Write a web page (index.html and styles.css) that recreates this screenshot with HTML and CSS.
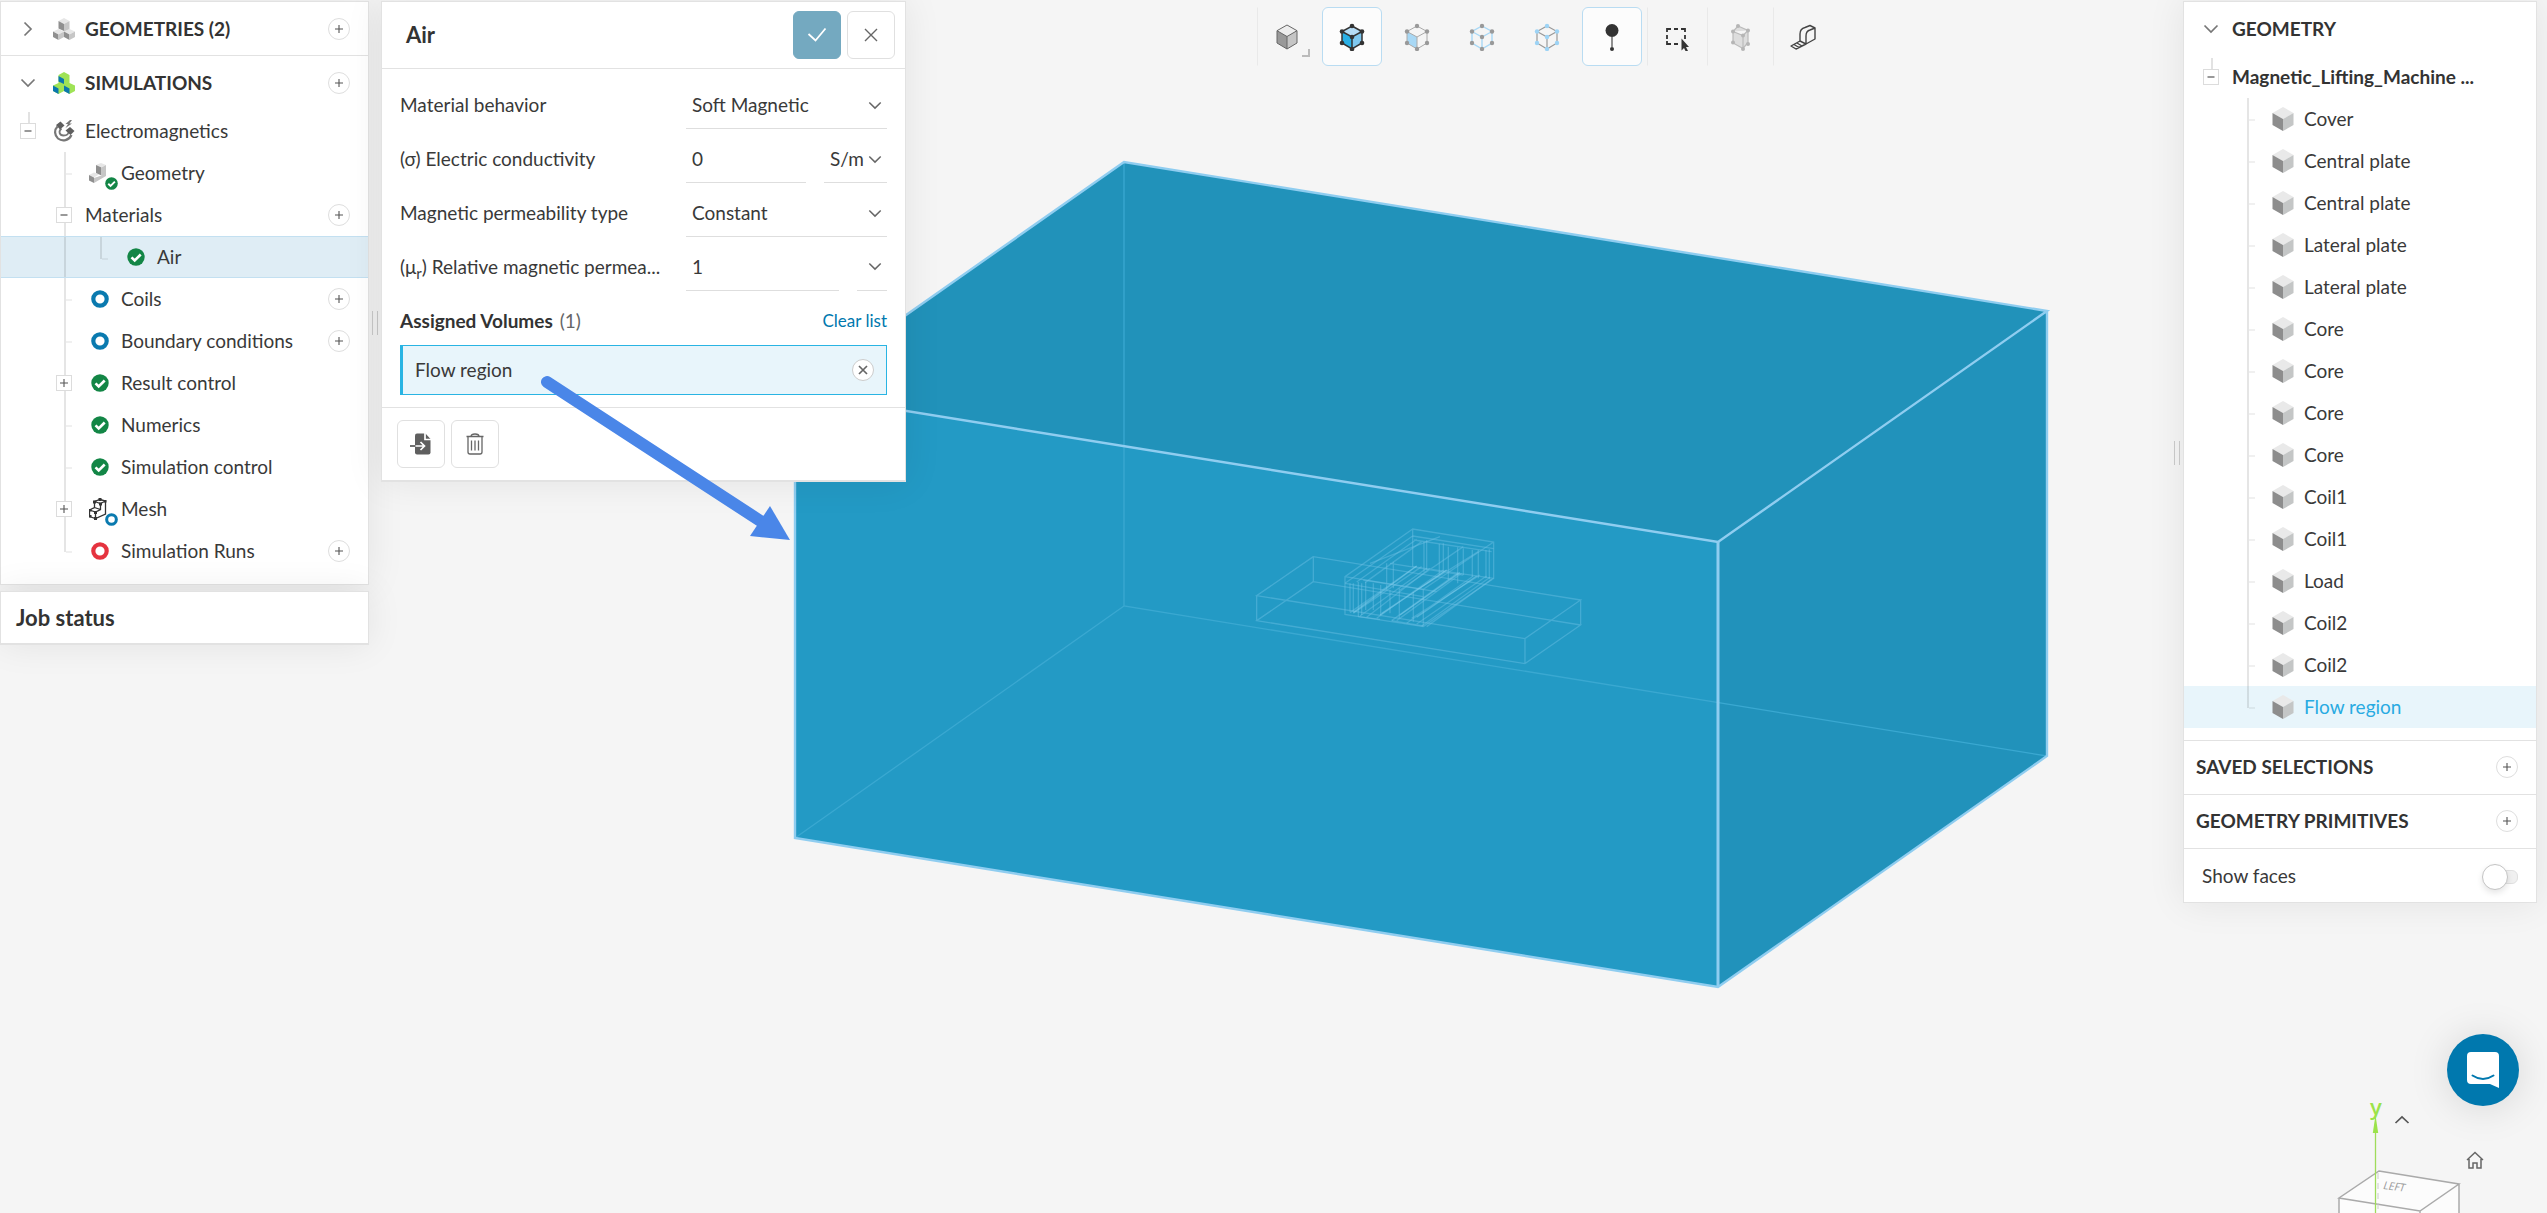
FILE: index.html
```html
<!DOCTYPE html>
<html lang="en">
<head>
<meta charset="utf-8">
<title>Electromagnetics - Air</title>
<link rel="stylesheet" href="styles.css">
</head>
<body>
<svg class="defs" aria-hidden="true">
  <symbol id="plus" viewBox="0 0 10 10"><path d="M5 1v8M1 5h8" fill="none" stroke="#555" stroke-width="1.1"/></symbol>
  <symbol id="minus" viewBox="0 0 10 10"><path d="M1.500 5h7" fill="none" stroke="#555" stroke-width="1.2"/></symbol>
  <symbol id="down" viewBox="0 0 16 10"><path d="M1.500 1.500L8 8l6.500-6.500" fill="none" stroke="currentColor" stroke-width="1.700"/></symbol>
  <symbol id="right" viewBox="0 0 10 16"><path d="M1.500 1.500L8 8l-6.500 6.500" fill="none" stroke="currentColor" stroke-width="1.700"/></symbol>
  <symbol id="ok" viewBox="0 0 18 18"><circle cx="9" cy="9" r="8.700" fill="#138646"/><path d="M4.500 9.300l3.200 3.200 6-6" fill="none" stroke="#fff" stroke-width="2.600"/></symbol>
  <symbol id="ring" viewBox="0 0 18 18"><circle cx="9" cy="9" r="6.700" fill="#fff" stroke="currentColor" stroke-width="4.200"/></symbol>
  <symbol id="cube" viewBox="0 0 22 26"><path d="M11 1l10.500 6L11 13 .5 7z" fill="#e9e9e9"/><path d="M.5 7L11 13v12L.5 19z" fill="#8d8d8d"/><path d="M21.500 7L11 13v12l10.500-6z" fill="#c4c6c6"/></symbol>
  <symbol id="geo" viewBox="0 0 22 22"><path d="M11 0l5.500 3-5.500 3-5.500-3zM5.500 11L11 13.500 5.500 16.500 0 13.500zM16.500 11l5.500 2.500-5.500 3-5.500-3z" fill="#e6e6e6"/><path d="M5.500 3L11 6v7l-5.500-2.500zM0 13.500l5.500 3V22L0 19zM11 13.500l5.500 3V22L11 19z" fill="#8f8f8f"/><path d="M16.500 3L11 6v7.500l5.500-2.500zM11 13.500l-5.500 3V22L11 19zM22 13.500l-5.500 3V22l5.500-3z" fill="#c6c6c6"/></symbol>
  <symbol id="sim" viewBox="0 0 22 22"><path d="M11 0l5.500 3v8l5.500 2.500V19l-5.500 3L11 19l-5.500 3L0 19v-5.500L5.500 11V3z" fill="#9fe356"/><path d="M5.500 4L11 7v5l-5.500-2.500zM0 13.500l5.500 3V22L0 19zM11 13.500l5.500 3V22L11 19z" fill="#0a78ae"/></symbol>
</svg>

<svg class="scene" viewBox="0 0 2547 1213" preserveAspectRatio="xMidYMid slice" role="img" aria-label="3D model view">
  <path d="M795 393L1124 162 2047 311 1718 542z" fill="#2192ba"/>
  <path d="M1718 542L2047 311V756L1718 987z" fill="#2192bb"/>
  <path d="M795 393L1718 542V987L795 838z" fill="#239ac5"/>
  <path d="M1124 162V606L2047 756M1124 606L795 838" fill="none" stroke="#3aa8d1" stroke-width="1.300"/>
  <g transform="translate(1230 500) scale(.3333)" fill="none" stroke="#72c4e6" stroke-width="4" stroke-opacity=".42">
    <path d="M250 170L80 287 885 416 1052 300zM250 245L80 362 885 491 1052 375zM250 170v75M80 287v75M885 416v75M1052 300v75"/>
    <path d="M548 87L345 230V343L580 380 791 235V126zM345 230L580 268 791 126M548 87V200M580 268V380"/>
    <path d="M548 108L345 250M560 118L380 246M575 125L405 248M548 108L791 146M552 120L785 155M345 250L580 290"/>
    <path d="M360 250V335M370 250V335M385 246V350M395 250V345M407 246V330M430 250V330M452 255V345M480 270V340M508 265V355M550 275V365"/>
    <path d="M582 125V215M590 120V210M628 132V225M640 130V215M655 140V240M683 142V250M700 145V225M727 150V230M745 150V235M768 150V235M778 148V238"/>
    <path d="M360 338L560 198M370 340L575 200M390 348L590 205M410 352L600 205M440 355L640 210M455 340L650 210M485 362L685 218M500 362L695 220M530 370L730 228M545 355L750 225M560 372L770 228M575 378L780 232M590 380L785 238"/>
    <path d="M420 190L630 110M470 190V270M490 185V265M510 270L700 140M560 270L745 155M400 240L620 275M480 190L700 225M548 200L791 235M385 350L450 358M485 362L580 378"/>
    <path d="M560 198L370 338M650 210L450 345M690 218L510 345M740 228L560 352" stroke="#8fd6f2"/>
  </g>
  <path d="M795 393L1124 162 2047 311 1718 542zM795 393V838L1718 987 2047 756V311" fill="none" stroke="#8fcdf0" stroke-width="2.400"/>
  <path d="M1718 542V987" stroke="#8fcdf0" stroke-width="3"/>
</svg>

<main class="layout">
  <aside class="left">
    <nav class="card" aria-label="Simulation tree">
      <div class="head ruled">
        <span class="slot"><svg class="chev-r"><use href="#right"/></svg></span>
        <span class="slot"><svg class="i22"><use href="#geo"/></svg></span>
        <h2>GEOMETRIES (2)</h2>
        <button class="add" aria-label="Add geometry"><svg><use href="#plus"/></svg></button>
      </div>
      <div class="head">
        <span class="slot"><svg class="chev"><use href="#down"/></svg></span>
        <span class="slot"><svg class="i22"><use href="#sim"/></svg></span>
        <h2>SIMULATIONS</h2>
        <button class="add" aria-label="Add simulation"><svg><use href="#plus"/></svg></button>
      </div>
      <div class="row">
        <span class="slot stub"><button class="box" aria-label="Collapse"><svg><use href="#minus"/></svg></button></span>
        <span class="slot"><svg class="i22" viewBox="0 0 22 22"><path d="M4.500 6.500C1 10 1.500 15.500 5 18.500c4.500 3.500 11 2 13.500-3.500" fill="none" stroke="#777" stroke-width="2.200"/><path d="M8.500 8.500c-3.500 3-2 7 2 7 3.500 0 5.500-1.500 5-4.500" fill="none" stroke="#777" stroke-width="1.800"/><path d="M3 5l4.500-3.500 4 4L7 9.500zM12.500 10.500l4.500-3.500 4.500 4-4 4z" fill="#5f5f5f"/><path d="M17 0l-4.500 4h2.500l-2.500 4L19 3.500h-2.500L19 0z" fill="#777"/></svg></span>
        <span>Electromagnetics</span>
      </div>
      <div class="row">
        <span class="slot"></span><span class="slot line"></span>
        <span class="slot badge"><svg class="i22" viewBox="0 0 22 22"><path d="M12 1l5 2-4.500 2.500L7 3zM0 13l5-2.500 5 2-5 3z" fill="#e6e6e6"/><path d="M7 3l5.500 2.500v8L7 11zM0 13l5 2.500V21l-5-2.500z" fill="#8f8f8f"/><path d="M17 3l-4.500 2.500v8L5 16v5l12-7z" fill="#c6c6c6"/></svg><svg class="mini"><use href="#ok"/></svg></span>
        <span>Geometry</span>
      </div>
      <div class="row">
        <span class="slot"></span><span class="slot line"><button class="box" aria-label="Collapse materials"><svg><use href="#minus"/></svg></button></span>
        <span>Materials</span>
        <button class="add" aria-label="Add material"><svg><use href="#plus"/></svg></button>
      </div>
      <div class="row picked">
        <span class="slot"></span><span class="slot line bare"></span><span class="slot line last"></span>
        <span class="slot"><svg class="i18"><use href="#ok"/></svg></span>
        <span>Air</span>
      </div>
      <div class="row">
        <span class="slot"></span><span class="slot line"></span>
        <span class="slot blue"><svg class="i18"><use href="#ring"/></svg></span>
        <span>Coils</span>
        <button class="add" aria-label="Add coil"><svg><use href="#plus"/></svg></button>
      </div>
      <div class="row">
        <span class="slot"></span><span class="slot line"></span>
        <span class="slot blue"><svg class="i18"><use href="#ring"/></svg></span>
        <span>Boundary conditions</span>
        <button class="add" aria-label="Add boundary condition"><svg><use href="#plus"/></svg></button>
      </div>
      <div class="row">
        <span class="slot"></span><span class="slot line"><button class="box" aria-label="Expand result control"><svg><use href="#plus"/></svg></button></span>
        <span class="slot"><svg class="i18"><use href="#ok"/></svg></span>
        <span>Result control</span>
      </div>
      <div class="row">
        <span class="slot"></span><span class="slot line"></span>
        <span class="slot"><svg class="i18"><use href="#ok"/></svg></span>
        <span>Numerics</span>
      </div>
      <div class="row">
        <span class="slot"></span><span class="slot line"></span>
        <span class="slot"><svg class="i18"><use href="#ok"/></svg></span>
        <span>Simulation control</span>
      </div>
      <div class="row">
        <span class="slot"></span><span class="slot line"><button class="box" aria-label="Expand mesh"><svg><use href="#plus"/></svg></button></span>
        <span class="slot badge blue"><svg class="i22" viewBox="0 0 22 22"><path d="M11 1.500l5.500 1.500v13L6.500 20.500l-6-2V12l5-2.500V3.500zM5.500 3.500l6 2 5-2.500M11.500 5.500v6l-5 2.500-6-2M5.500 9.500l6 2M6.500 14v6.500M11.500 11.500V5" fill="none" stroke="#333" stroke-width="1.300"/><path d="M9.500 0h3v3h-3zM4 2.500h3v3H4zM15 2h2.500v2.500H15zM10 4.500h3v3h-3zM0 11h2.500v2.500H0zM5 13h3v3H5zM5 19h3v3H5zM0 17h2.500v2.500H0z" fill="#333"/></svg><svg class="mini"><use href="#ring"/></svg></span>
        <span>Mesh</span>
      </div>
      <div class="row">
        <span class="slot"></span><span class="slot line last"></span>
        <span class="slot red"><svg class="i18"><use href="#ring"/></svg></span>
        <span>Simulation Runs</span>
        <button class="add" aria-label="Add simulation run"><svg><use href="#plus"/></svg></button>
      </div>
    </nav>
    <section class="card job"><h2>Job status</h2></section>
  </aside>

  <div class="grip" role="separator"></div>

  <form class="card panel">
    <header>
      <h1>Air</h1>
      <button type="button" class="sq primary" aria-label="Apply"><svg width="20" height="16" viewBox="0 0 20 16"><path d="M1.500 7l7 6.500L18.500 1.500" fill="none" stroke="#fff" stroke-width="1.800"/></svg></button>
      <button type="button" class="sq" aria-label="Close"><svg width="14" height="14" viewBox="0 0 14 14"><path d="M1 1l12 12M13 1L1 13" fill="none" stroke="#666" stroke-width="1.400"/></svg></button>
    </header>
    <div class="fields">
      <div class="field">
        <label for="behavior">Material behavior</label>
        <div class="pick wide"><select id="behavior"><option>Soft Magnetic</option></select><svg><use href="#down"/></svg></div>
      </div>
      <div class="field">
        <label for="sigma">(σ) Electric conductivity</label>
        <input id="sigma" type="text" value="0">
        <div class="pick unit"><select aria-label="Unit"><option>S/m</option></select><svg><use href="#down"/></svg></div>
      </div>
      <div class="field">
        <label for="ptype">Magnetic permeability type</label>
        <div class="pick wide"><select id="ptype"><option>Constant</option></select><svg><use href="#down"/></svg></div>
      </div>
      <div class="field">
        <label for="mu">(μ<sub>r</sub>) Relative magnetic permea...</label>
        <input id="mu" type="text" value="1">
        <button type="button" class="more" aria-label="More options"><svg><use href="#down"/></svg></button>
      </div>
      <div class="assigned">
        <h3>Assigned Volumes</h3><span class="count">(1)</span><a href="#clear">Clear list</a>
      </div>
      <div class="chip">
        <span>Flow region</span>
        <button type="button" class="add" aria-label="Remove Flow region"><svg viewBox="0 0 10 10"><path d="M1 1l8 8M9 1L1 9" fill="none" stroke="#666" stroke-width="1.700"/></svg></button>
      </div>
    </div>
    <footer>
      <button type="button" class="sq" aria-label="Import"><svg width="22" height="22" viewBox="0 0 22 22"><path d="M7 .5h8.500L20.500 6v13.500a2 2 0 0 1-2 2H7a2 2 0 0 1-2-2v-17a2 2 0 0 1 2-2z" fill="#5f5f5f"/><path d="M15 0v6.500h6M5 13h9M10.500 9l4 4-4 4" fill="none" stroke="#fff" stroke-width="1.700"/><path d="M0 13h5.500" stroke="#5f5f5f" stroke-width="1.800"/></svg></button>
      <button type="button" class="sq" aria-label="Delete"><svg width="18" height="22" viewBox="0 0 18 22"><path d="M.5 3.500h17M5 3.500q0-2.500 4-2.500t4 2.500M2 4v15q0 2 2 2h10q2 0 2-2V4M5.500 7.500v10M9 7.500v10M12.500 7.500v10" fill="none" stroke="#666" stroke-width="1.300"/></svg></button>
    </footer>
  </form>

  <div class="tools" role="toolbar" aria-label="View tools">
    <button class="first" aria-label="Shading"><svg viewBox="0 0 26 26"><path d="M13 1l10 5.700L13 12.500 3 6.700z" fill="#ededed"/><path d="M3 6.700l10 5.800V25L3 19z" fill="#999"/><path d="M23 6.700l-10 5.800V25l10-6z" fill="#c5c5c5"/><path d="M13 1l10 5.700V19L13 25 3 19V6.700zM3 6.700l10 5.800 10-5.800M13 12.500V25" fill="none" stroke="#666"/></svg></button>
    <button class="on" aria-label="Select volumes"><svg viewBox="0 0 26 28"><path d="M13 3l10 5.500L13 14 3 8.500z" fill="#b5dcf5"/><path d="M3 8.500L13 14v12L3 20z" fill="#29b0e6"/><path d="M23 8.500L13 14v12l10-6z" fill="#7fc8ef"/><path d="M13 3l10 5.500V20l-10 6-10-6V8.500zM3 8.500L13 14l10-5.500M13 14v12" fill="none" stroke="#333" stroke-width="1.500"/><g fill="#333"><circle cx="13" cy="3" r="2.300"/><circle cx="23" cy="8.500" r="2.300"/><circle cx="23" cy="20" r="2.300"/><circle cx="13" cy="26" r="2.300"/><circle cx="3" cy="20" r="2.300"/><circle cx="3" cy="8.500" r="2.300"/><circle cx="13" cy="14" r="2.300"/></g></svg></button>
    <button aria-label="Select faces"><svg viewBox="0 0 26 28"><path d="M3 8.500L13 14v12L3 20z" fill="#a8d8f5"/><path d="M13 3l10 5.500V20l-10 6-10-6V8.500zM3 8.500L13 14l10-5.500M13 14v12" fill="none" stroke="#aaa"/><g fill="#999"><circle cx="13" cy="3" r="2.200"/><circle cx="23" cy="8.500" r="2.200"/><circle cx="23" cy="20" r="2.200"/><circle cx="13" cy="26" r="2.200"/><circle cx="3" cy="20" r="2.200"/><circle cx="3" cy="8.500" r="2.200"/></g></svg></button>
    <button aria-label="Select edges"><svg viewBox="0 0 26 28"><path d="M13 3l10 5.500V20l-10 6-10-6V8.500zM3 8.500L13 14l10-5.500M13 14v12" fill="none" stroke="#a8d8f5" stroke-width="1.400"/><g fill="#999"><circle cx="13" cy="3" r="2.200"/><circle cx="23" cy="8.500" r="2.200"/><circle cx="23" cy="20" r="2.200"/><circle cx="13" cy="26" r="2.200"/><circle cx="3" cy="20" r="2.200"/><circle cx="3" cy="8.500" r="2.200"/><circle cx="13" cy="14" r="2.200"/></g></svg></button>
    <button aria-label="Select nodes"><svg viewBox="0 0 26 28"><path d="M13 3l10 5.500V20l-10 6-10-6V8.500zM3 8.500L13 14l10-5.500M13 14v12" fill="none" stroke="#999" stroke-width="1.200"/><g fill="#9dd3f5"><circle cx="13" cy="3" r="2.200"/><circle cx="23" cy="8.500" r="2.200"/><circle cx="23" cy="20" r="2.200"/><circle cx="13" cy="26" r="2.200"/><circle cx="3" cy="20" r="2.200"/><circle cx="3" cy="8.500" r="2.200"/><circle cx="13" cy="14" r="2.200"/></g></svg></button>
    <button class="on" aria-label="Probe point"><svg viewBox="0 0 26 28"><circle cx="13" cy="7.500" r="6.500" fill="#333"/><circle cx="13" cy="26" r="2" fill="#333"/><path d="M13 14v11" stroke="#555" stroke-width="1.300"/></svg></button>
    <button class="sep gap" aria-label="Box select"><svg viewBox="0 0 26 28"><path d="M3 9V6h4M10 6h4M17 6h4v3M21 12v4M3 12v4M3 18v3h4M10 21h4" fill="none" stroke="#333" stroke-width="1.800"/><path d="M17.500 15.500v12l2.500-2.500 2 4 2-1-2-4h3z" fill="#333"/></svg></button>
    <button class="sep broad" aria-label="Clip mesh"><svg viewBox="0 0 26 28"><path d="M11 3l10 4.500v12l-5 6-10-5.500V8.500zM6 8.500l10 4 5-5M16 12.500v13" fill="#ddd" stroke="#bbb" stroke-width="1.200"/><g fill="#b5b5b5"><circle cx="11" cy="3" r="2"/><circle cx="21" cy="7.500" r="2"/><circle cx="21" cy="21" r="2"/><circle cx="16" cy="26" r="2"/><circle cx="6" cy="19.500" r="2"/><circle cx="6" cy="8.500" r="2"/><circle cx="16" cy="12.500" r="2"/></g></svg></button>
    <button class="sep" aria-label="Measure"><svg viewBox="0 0 26 28"><path d="M10 18V11C10 7 13 5 15 4.500L20 2.500 25 5V16L16 21V13C16 9 18 7.500 20 7L25 5M10 18L1 23 6 26 16 21 10 18M4 21.500l5 3M7 20l5 3" fill="none" stroke="#444" stroke-width="1.400" stroke-linejoin="round"/></svg></button>
  </div>

  <aside class="right card" aria-label="Geometry tree">
    <div class="grip" role="separator"></div>
    <div class="head">
      <span class="slot"><svg class="chev"><use href="#down"/></svg></span>
      <h2>GEOMETRY</h2>
    </div>
    <div class="row strong">
      <span class="slot stub"><button class="box" aria-label="Collapse"><svg><use href="#minus"/></svg></button></span>
      <span>Magnetic_Lifting_Machine ...</span>
    </div>
    <div class="row"><span class="slot"></span><span class="slot line"></span><span class="slot"><svg class="cube"><use href="#cube"/></svg></span><span>Cover</span></div>
    <div class="row"><span class="slot"></span><span class="slot line"></span><span class="slot"><svg class="cube"><use href="#cube"/></svg></span><span>Central plate</span></div>
    <div class="row"><span class="slot"></span><span class="slot line"></span><span class="slot"><svg class="cube"><use href="#cube"/></svg></span><span>Central plate</span></div>
    <div class="row"><span class="slot"></span><span class="slot line"></span><span class="slot"><svg class="cube"><use href="#cube"/></svg></span><span>Lateral plate</span></div>
    <div class="row"><span class="slot"></span><span class="slot line"></span><span class="slot"><svg class="cube"><use href="#cube"/></svg></span><span>Lateral plate</span></div>
    <div class="row"><span class="slot"></span><span class="slot line"></span><span class="slot"><svg class="cube"><use href="#cube"/></svg></span><span>Core</span></div>
    <div class="row"><span class="slot"></span><span class="slot line"></span><span class="slot"><svg class="cube"><use href="#cube"/></svg></span><span>Core</span></div>
    <div class="row"><span class="slot"></span><span class="slot line"></span><span class="slot"><svg class="cube"><use href="#cube"/></svg></span><span>Core</span></div>
    <div class="row"><span class="slot"></span><span class="slot line"></span><span class="slot"><svg class="cube"><use href="#cube"/></svg></span><span>Core</span></div>
    <div class="row"><span class="slot"></span><span class="slot line"></span><span class="slot"><svg class="cube"><use href="#cube"/></svg></span><span>Coil1</span></div>
    <div class="row"><span class="slot"></span><span class="slot line"></span><span class="slot"><svg class="cube"><use href="#cube"/></svg></span><span>Coil1</span></div>
    <div class="row"><span class="slot"></span><span class="slot line"></span><span class="slot"><svg class="cube"><use href="#cube"/></svg></span><span>Load</span></div>
    <div class="row"><span class="slot"></span><span class="slot line"></span><span class="slot"><svg class="cube"><use href="#cube"/></svg></span><span>Coil2</span></div>
    <div class="row"><span class="slot"></span><span class="slot line"></span><span class="slot"><svg class="cube"><use href="#cube"/></svg></span><span>Coil2</span></div>
    <div class="row region"><span class="slot"></span><span class="slot line last"></span><span class="slot"><svg class="cube"><use href="#cube"/></svg></span><span>Flow region</span></div>
    <div class="head group"><h2>SAVED SELECTIONS</h2><button class="add" aria-label="Add selection"><svg><use href="#plus"/></svg></button></div>
    <div class="head group"><h2>GEOMETRY PRIMITIVES</h2><button class="add" aria-label="Add primitive"><svg><use href="#plus"/></svg></button></div>
    <div class="head group faces"><label for="faces">Show faces</label><input id="faces" type="checkbox" class="switch"></div>
  </aside>
</main>

<svg class="pointer" width="260" height="180" viewBox="540 370 260 180" aria-hidden="true"><path d="M547 382L762 522" stroke="#4a86e8" stroke-width="12" stroke-linecap="round"/><path d="M790 540L770 506 750 536z" fill="#4a86e8"/></svg>

<div class="orient">
  <svg viewBox="0 0 247 203" aria-label="View orientation">
    <path d="M79 161L159 174V203H39V188z" fill="#fcfcfc"/>
    <path d="M79 161L159 174 120 201 39 188zM39 188v15M120 201v2M159 174v29" fill="none" stroke="#aaa" stroke-width="1.500"/>
    <path d="M78 163v40" stroke="#ccc" stroke-dasharray="6 4"/>
    <path d="M75.500 122v81" stroke="#9fdc5a" stroke-width="1.300"/><path d="M75.500 105l2.700 18h-5.400z" fill="#9be34a"/>
    <text x="70" y="105" class="axis">y</text>
    <text x="83" y="179" class="face" transform="rotate(7 83 179)">LEFT</text>
  </svg>
  <button class="up" aria-label="Rotate up"><svg viewBox="0 0 16 10"><path d="M1.500 8L8 2l6.500 6" fill="none" stroke="#555" stroke-width="1.700"/></svg></button>
  <button class="home" aria-label="Home view"><svg viewBox="0 0 18 18"><path d="M1 9l8-7.500L17 9M3 8v9h4v-5h4v5h4V8" fill="none" stroke="#666" stroke-width="1.500"/></svg></button>
</div>
<button class="chat" aria-label="Open chat"><svg width="32" height="36" viewBox="0 0 32 36"><path d="M4 0h24a4 4 0 0 1 4 4v32l-9-4H4a4 4 0 0 1-4-4V4a4 4 0 0 1 4-4z" fill="#fff"/><path d="M5.500 23.500q10.500 7 21 0" fill="none" stroke="#0078ae" stroke-width="2" stroke-linecap="round"/></svg></button>
</body>
</html>
```
FILE: styles.css
```css
* { box-sizing: border-box; }
body {
  margin: 0;
  min-height: 100vh;
  position: relative;
  overflow: hidden;
  background: #f5f5f5;
  color: #393939;
  font: 19px/24px Lato, "Liberation Sans", sans-serif;
}
h1, h2, h3 { margin: 0; font-weight: 700; color: #333; }
h2, h3 { font-size: 19px; line-height: 24px; }
button, input, select { font: inherit; color: inherit; margin: 0; padding: 0; border: 0; background: none; }
svg { display: block; flex: none; }
.defs { position: absolute; width: 0; height: 0; }
.scene { position: absolute; inset: 0; width: 100%; height: 100%; }

.layout {
  position: relative;
  display: flex;
  align-items: flex-start;
  padding: 1px 10px 0 0;
}
.card {
  background: #fff;
  border: 1px solid #e2e2e2;
  box-shadow: 0 0 36px rgba(0, 0, 0, .08);
}
.left { width: 369px; flex: none; display: flex; flex-direction: column; gap: 6px; }
.left nav { padding-bottom: 12px; }
.job { height: 54px; padding: 14px 15px; border-bottom-width: 2px; }
.job h2 { font-size: 22px; }

.head { display: flex; align-items: center; height: 54px; padding: 0 18px 0 9px; color: #777; }
.ruled { border-bottom: 1px solid #e2e2e2; }
.row { display: flex; align-items: center; height: 42px; padding: 0 18px 0 9px; white-space: nowrap; }
.slot { width: 36px; align-self: stretch; flex: none; display: flex; align-items: center; justify-content: center; position: relative; }
.slot + :not(.slot) { margin-left: 3px; }
.line {
  background:
    linear-gradient(rgba(0, 0, 0, .1), rgba(0, 0, 0, .1)) 18px 0 / 2px 100% no-repeat,
    linear-gradient(rgba(0, 0, 0, .06), rgba(0, 0, 0, .06)) 20px 21px / 6px 2px no-repeat;
}
.bare { background-size: 2px 100%, 0 0; }
.last { background-size: 2px 22px, 6px 2px; }
.stub { background: linear-gradient(#e2e2e2, #e2e2e2) 18px 2px / 2px 12px no-repeat; }
.box {
  width: 16px; height: 16px;
  display: flex; align-items: center; justify-content: center;
  background: #fff; border: 1px solid #dcdcdc;
}
.box svg { width: 10px; height: 10px; }
.add {
  width: 22px; height: 22px; margin-left: auto; flex: none;
  display: flex; align-items: center; justify-content: center;
  background: #fff; border: 1px solid #dedede; border-radius: 50%;
}
.add svg { width: 10px; height: 10px; }
.i22 { width: 22px; height: 22px; }
.i18 { width: 18px; height: 18px; }
.cube { width: 22px; height: 26px; }
.chev { width: 16px; height: 10px; }
.chev-r { width: 10px; height: 16px; }
.mini { position: absolute; right: 0; bottom: 4px; width: 13px; height: 13px; }
.blue { color: #0a7aaf; }
.red { color: #e5333f; }
.picked { background: #dfedf5; border: 1px solid #c3e0f1; border-width: 1px 0; }

.grip { width: 6px; height: 24px; margin: 310px 3px 0; flex: none; border: 1px solid #c6c6c6; border-width: 0 1px; }
.right .grip { position: absolute; left: -10px; top: 439px; margin: 0; }

.panel { width: 525px; flex: none; border-bottom-width: 2px; }
.panel header { display: flex; align-items: center; gap: 6px; height: 67px; padding: 0 10px 0 24px; border-bottom: 1px solid #e2e2e2; }
.panel h1 { flex: 1; font-size: 22px; line-height: 28px; }
.sq {
  width: 48px; height: 48px;
  display: flex; align-items: center; justify-content: center;
  background: #fff; border: 1px solid #e0e0e0; border-radius: 6px;
}
.primary { background: #74a9c0; border-color: #74a9c0; }
.fields { padding: 6px 18px 12px; }
.field { display: flex; height: 54px; gap: 18px; }
.field label { flex: 1; min-width: 0; line-height: 60px; white-space: nowrap; }
.field sub { font-size: 15px; line-height: 0; }
.field input, .pick, .more { border-bottom: 1px solid #dedede; height: 54px; }
.field input { width: 120px; flex: none; padding: 6px 0 0 6px; }
#mu { width: 153px; }
.wide { width: 201px; }
.unit { width: 63px; }
.pick { position: relative; flex: none; }
.pick select { width: 100%; height: 54px; padding: 6px 0 0 6px; appearance: none; }
.pick svg { position: absolute; right: 5px; top: 26px; pointer-events: none; }
.pick svg, .more svg { width: 14px; height: 9px; color: #666; }
.more { width: 30px; padding: 6px 5px 0 11px; }
.assigned { display: flex; align-items: center; height: 54px; padding-top: 5px; gap: 7px; }
.count { color: #666; }
.assigned a { margin-left: auto; font-size: 17px; color: #0078ae; text-decoration: none; }
.chip {
  display: flex; align-items: center; height: 50px; padding: 0 12px;
  background: #e8f5fb; border: 1px solid #29b4e3; border-left-width: 3px;
}
.chip .add { border: 1px solid #ccc; }
.panel footer { display: flex; gap: 6px; padding: 12px 15px; border-top: 1px solid #e2e2e2; }

.tools { flex: 1; display: flex; justify-content: center; gap: 5px; padding-top: 6px; }
.tools button {
  width: 60px; height: 59px; flex: none; position: relative;
  display: flex; align-items: center; justify-content: center;
  border: 1px solid transparent;
}
.tools svg { width: 26px; height: 28px; }
.tools .on { background: #fcfcfc; border-color: #b9dcf2; border-radius: 6px; }
.tools .sep { margin-left: -5px; border-left-color: #e9e9e9; }
.tools .gap { margin-left: 0; }
.tools .broad { width: 66px; }
.tools .first { border-left-color: #e9e9e9; }
.first::after { content: ""; position: absolute; right: 6px; bottom: 8px; width: 6px; height: 6px; border: 2px solid #bbb; border-width: 0 2px 2px 0; }

.right { width: 354px; flex: none; position: relative; }
.strong { font-weight: 700; color: #333; }
.region { background: #e8f5fb; color: #29abe2; margin-bottom: 12px; }
.group { border-top: 1px solid #e2e2e2; padding: 0 18px 2px 12px; }
.faces { color: #393939; padding: 0 18px; }
.switch { appearance: none; margin-left: auto; width: 36px; height: 24px; position: relative; }
.switch::before { content: ""; position: absolute; right: 0; top: 6px; width: 24px; height: 12px; border-radius: 6px; background: #f0f0f0; border: 1px solid #e0e0e0; }
.switch::after { content: ""; position: absolute; left: 0; top: 0; width: 24px; height: 24px; border-radius: 50%; background: #fff; border: 1px solid #c4c4c4; box-shadow: 0 3px 6px rgba(0, 0, 0, .1); }

.pointer { position: absolute; left: 540px; top: 370px; pointer-events: none; }
.orient { position: absolute; right: 0; bottom: 0; width: 247px; height: 203px; }
.orient button { position: absolute; }
.axis { font: 600 22px "Open Sans", sans-serif; fill: #9be34a; }
.face { font: italic 11px "Open Sans", sans-serif; fill: #999; }
.up { left: 94px; top: 105px; width: 16px; height: 10px; }
.home { left: 166px; top: 141px; width: 18px; height: 18px; }
.chat {
  position: absolute; right: 28px; bottom: 107px; width: 72px; height: 72px;
  display: flex; align-items: center; justify-content: center;
  background: #0078ae; border-radius: 50%;
  box-shadow: 0 2px 40px rgba(0, 0, 0, .13);
}
```
